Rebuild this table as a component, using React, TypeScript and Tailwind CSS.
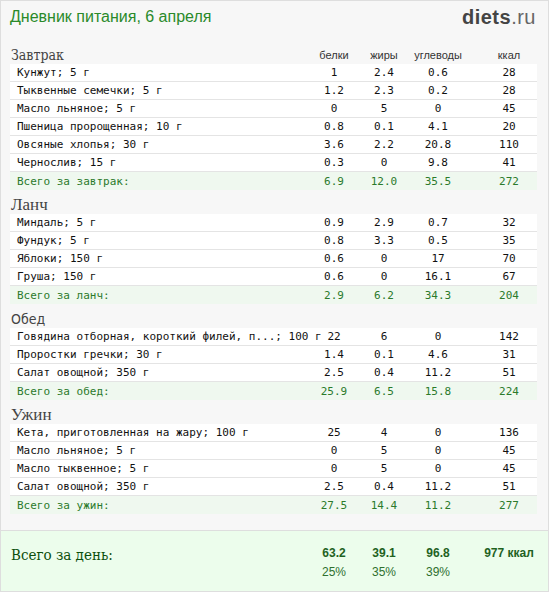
const meals = [
  {
    title: 'Завтрак',
    font: "font-['DejaVu_Serif',serif] text-[14px] [font-stretch:condensed]",
    items: [
      ['Кунжут; 5 г', '1', '2.4', '0.6', '28'],
      ['Тыквенные семечки; 5 г', '1.2', '2.3', '0.2', '28'],
      ['Масло льняное; 5 г', '0', '5', '0', '45'],
      ['Пшеница пророщенная; 10 г', '0.8', '0.1', '4.1', '20'],
      ['Овсяные хлопья; 30 г', '3.6', '2.2', '20.8', '110'],
      ['Чернослив; 15 г', '0.3', '0', '9.8', '41'],
    ],
    total: ['Всего за завтрак:', '6.9', '12.0', '35.5', '272'],
  },
  {
    title: 'Ланч',
    font: "font-['Liberation_Serif',serif] text-[17px]",
    items: [
      ['Миндаль; 5 г', '0.9', '2.9', '0.7', '32'],
      ['Фундук; 5 г', '0.8', '3.3', '0.5', '35'],
      ['Яблоки; 150 г', '0.6', '0', '17', '70'],
      ['Груша; 150 г', '0.6', '0', '16.1', '67'],
    ],
    total: ['Всего за ланч:', '2.9', '6.2', '34.3', '204'],
  },
  {
    title: 'Обед',
    font: "font-['DejaVu_Sans',sans-serif] text-[14px] [font-stretch:condensed]",
    items: [
      ['Говядина отборная, короткий филей, п...; 100 г', '22', '6', '0', '142'],
      ['Проростки гречки; 30 г', '1.4', '0.1', '4.6', '31'],
      ['Салат овощной; 350 г', '2.5', '0.4', '11.2', '51'],
    ],
    total: ['Всего за обед:', '25.9', '6.5', '15.8', '224'],
  },
  {
    title: 'Ужин',
    font: "font-['Liberation_Serif',serif] text-[17px]",
    items: [
      ['Кета, приготовленная на жару; 100 г', '25', '4', '0', '136'],
      ['Масло льняное; 5 г', '0', '5', '0', '45'],
      ['Масло тыквенное; 5 г', '0', '5', '0', '45'],
      ['Салат овощной; 350 г', '2.5', '0.4', '11.2', '51'],
    ],
    total: ['Всего за ужин:', '27.5', '14.4', '11.2', '277'],
  },
];

function Cells({ values }: { values: string[] }) {
  return (
    <>
      <div className="w-[50px] text-center">{values[0]}</div>
      <div className="w-[50px] text-center">{values[1]}</div>
      <div className="w-[58px] text-center">{values[2]}</div>
      <div className="w-[70px] pl-[14px] text-center">{values[3]}</div>
    </>
  );
}

function Row({ row, total }: { row: string[]; total?: boolean }) {
  return (
    <div
      className={`flex h-[18px] items-center text-[11px] leading-[17px] font-['DejaVu_Sans_Mono',monospace] ${
        total
          ? 'bg-[#eff8ef] text-[#2b7a2b]'
          : 'border-b border-[#e4e4e4] bg-white text-[#111]'
      }`}
    >
      <div className="min-w-0 flex-1 whitespace-nowrap pl-[7px]">{row[0]}</div>
      <Cells values={row.slice(1)} />
    </div>
  );
}

export default function App() {
  return (
    <div className="w-[549px] h-[592px] border border-[#dedede] bg-[#f7f7f7] flex flex-col">
      {/* Header */}
      <div className="flex h-[31px] items-center justify-between pl-[9px] pr-[12px]">
        <h1 className="text-[16px] text-[#2a8a2a] font-['Liberation_Sans',sans-serif]">
          Дневник питания, 6 апреля
        </h1>
        <div className="text-[20px] text-[#444] font-['Liberation_Sans',sans-serif] tracking-[0.5px]">
          <span className="font-bold">diets</span>
          <span className="text-[#666]">.ru</span>
        </div>
      </div>

      {/* Meals */}
      <div className="flex-1 pl-[9px] pr-[11px] pt-[14px]">
        {meals.map((meal, i) => (
          <div key={meal.title} className={i > 0 ? 'mt-[6px]' : ''}>
            <div className="flex h-[18px] items-center">
              <div className={`flex-1 pl-[1px] text-[#444] ${meal.font}`}>{meal.title}</div>
              {i === 0 && (
                <div className="flex text-[11px] text-[#333] font-['Liberation_Sans',sans-serif]">
                  <Cells values={['белки', 'жиры', 'углеводы', 'ккал']} />
                </div>
              )}
            </div>
            {meal.items.map((row, j) => (
              <Row key={j} row={row} />
            ))}
            <Row row={meal.total} total />
          </div>
        ))}
      </div>

      {/* Day total */}
      <div className="flex h-[61px] border-t border-[#dedede] bg-[#ecfdec] pl-[9px] pr-[11px] pt-[13px]">
        <div className="flex-1 pl-[1px] text-[15px] text-[#0d4f0d] font-['DejaVu_Serif',serif] [font-stretch:condensed]">
          Всего за день:
        </div>
        <div className="flex flex-col font-['Liberation_Sans',sans-serif] text-[#1f621f]">
          <div className="flex text-[12px] font-bold leading-[18px]">
            <Cells values={['63.2', '39.1', '96.8', '977 ккал']} />
          </div>
          <div className="flex text-[12px] leading-[20px] text-[#2f702f]">
            <Cells values={['25%', '35%', '39%', '']} />
          </div>
        </div>
      </div>
    </div>
  );
}
